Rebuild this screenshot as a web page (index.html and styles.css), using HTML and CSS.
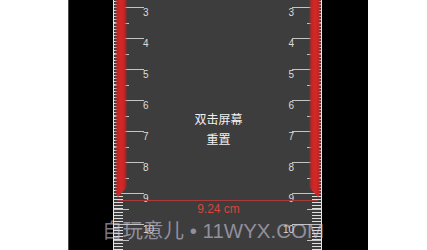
FILE: index.html
```html
<!DOCTYPE html>
<html lang="zh">
<head>
<meta charset="utf-8">
<link rel="stylesheet" href="styles.css">
</head>
<body>
<div class="frame">
  <div class="side side-left"></div>
  <div class="bezel bezel-left"></div>
  <div class="screen">
    <div class="band band-left"></div>
    <div class="band band-right"></div>
    <div class="ruler ruler-left">
      <div class="cm"><div class="long"></div><div class="num">3</div><div class="mid"></div></div>
      <div class="cm"><div class="long"></div><div class="num">4</div><div class="mid"></div></div>
      <div class="cm"><div class="long"></div><div class="num">5</div><div class="mid"></div></div>
      <div class="cm"><div class="long"></div><div class="num">6</div><div class="mid"></div></div>
      <div class="cm"><div class="long"></div><div class="num">7</div><div class="mid"></div></div>
      <div class="cm"><div class="long"></div><div class="num">8</div><div class="mid"></div></div>
      <div class="cm"><div class="long"></div><div class="num">9</div><div class="mid"></div></div>
      <div class="cm"><div class="long"></div><div class="num">10</div><div class="mid"></div></div>
    </div>
    <div class="ruler ruler-right">
      <div class="cm"><div class="long"></div><div class="num">3</div><div class="mid"></div></div>
      <div class="cm"><div class="long"></div><div class="num">4</div><div class="mid"></div></div>
      <div class="cm"><div class="long"></div><div class="num">5</div><div class="mid"></div></div>
      <div class="cm"><div class="long"></div><div class="num">6</div><div class="mid"></div></div>
      <div class="cm"><div class="long"></div><div class="num">7</div><div class="mid"></div></div>
      <div class="cm"><div class="long"></div><div class="num">8</div><div class="mid"></div></div>
      <div class="cm"><div class="long"></div><div class="num">9</div><div class="mid"></div></div>
      <div class="cm"><div class="long"></div><div class="num">10</div><div class="mid"></div></div>
    </div>
    <div class="hint">双击屏幕<br>重置</div>
    <div class="measure">
      <div class="measure-line"></div>
      <div class="measure-text">9.24 cm</div>
    </div>
  </div>
  <div class="bezel bezel-right"></div>
  <div class="side side-right"></div>
</div>
<div class="watermark">自玩意儿 • 11WYX.COM</div>
</body>
</html>
```

FILE: styles.css
```css
html, body {
  margin: 0;
  padding: 0;
}
body {
  width: 427px;
  height: 250px;
  overflow: hidden;
  position: relative;
  background: #fff;
  font-family: "Liberation Sans", "Noto Sans CJK SC", sans-serif;
}
.frame {
  display: flex;
  height: 250px;
}
.side {
  background: #fff;
}
.side-left {
  width: 68px;
}
.side-right {
  flex: 1;
}
.bezel {
  background: #000;
}
.bezel-left {
  width: 44px;
  border-left: 1px solid #4c4c4c;
}
.bezel-right {
  width: 46px;
}
.screen {
  width: 209px;
  background: #3d3d3d;
  display: grid;
  grid-template: 250px / 209px;
  overflow: hidden;
}
.screen > * {
  grid-area: 1 / 1;
}
.band {
  width: 12px;
  height: 197px;
  background: linear-gradient(to right, rgba(190, 30, 30, 0.15) 0, #c42424 22%, #d42828 50%, #c42424 78%, rgba(190, 30, 30, 0.15) 100%);
}
.band-left {
  justify-self: start;
  margin-left: 2px;
  clip-path: polygon(0 0, 100% 0, 100% 95%, 25% 100%, 0 98%);
}
.band-right {
  justify-self: end;
  margin-right: 1px;
  clip-path: polygon(0 0, 100% 0, 100% 98%, 75% 100%, 0 95%);
}
.ruler {
  width: 40px;
  display: flex;
  flex-direction: column;
  padding-top: 7px;
  background-image: repeating-linear-gradient(to bottom, #dedede 0 1px, transparent 1px 3.1px);
  background-size: 9px 31px;
  background-repeat: repeat-y;
  background-position-y: 7px;
}
.ruler-left {
  justify-self: start;
  border-left: 1px solid #e6e6e6;
  align-items: flex-start;
  background-position-x: 0;
}
.ruler-right {
  justify-self: end;
  border-right: 1px solid #e6e6e6;
  align-items: flex-end;
  background-position-x: right;
}
.cm {
  height: 31px;
  flex: none;
  display: flex;
  flex-direction: column;
  align-self: stretch;
}
.ruler-left .cm {
  align-items: flex-start;
}
.ruler-right .cm {
  align-items: flex-end;
}
.long {
  width: 30px;
  height: 1px;
  background: #c4c4c4;
}
.ruler-right .long {
  width: 29px;
}
.num {
  font-size: 10px;
  line-height: 10px;
  height: 10px;
  color: #dcdcdc;
}
.ruler-left .num {
  margin-left: 29px;
}
.ruler-right .num {
  margin-right: 27px;
}
.mid {
  width: 15px;
  height: 1px;
  margin-top: 5px;
  background: #c4c4c4;
}
.ruler-right .mid {
  width: 14px;
}
.hint {
  align-self: start;
  justify-self: center;
  margin-top: 109px;
  margin-left: 2px;
  text-align: center;
  color: #f0f0f0;
  font-size: 12px;
  line-height: 20px;
  font-family: "Noto Sans CJK SC", sans-serif;
}
.measure {
  align-self: start;
  justify-self: stretch;
  margin-top: 200px;
  display: flex;
  flex-direction: column;
  align-items: center;
}
.measure-line {
  align-self: stretch;
  height: 1px;
  margin: 0 4px;
  background: #a83c3c;
}
.measure-text {
  margin-top: 1px;
  margin-left: 2px;
  font-size: 12px;
  line-height: 14px;
  color: #d8463c;
}
.watermark {
  position: absolute;
  left: 102px;
  top: 217px;
  font-size: 20.5px;
  line-height: 28px;
  color: rgba(205, 200, 222, 0.6);
  white-space: nowrap;
  font-family: "Liberation Sans", "Noto Sans CJK SC", sans-serif;
}
```
